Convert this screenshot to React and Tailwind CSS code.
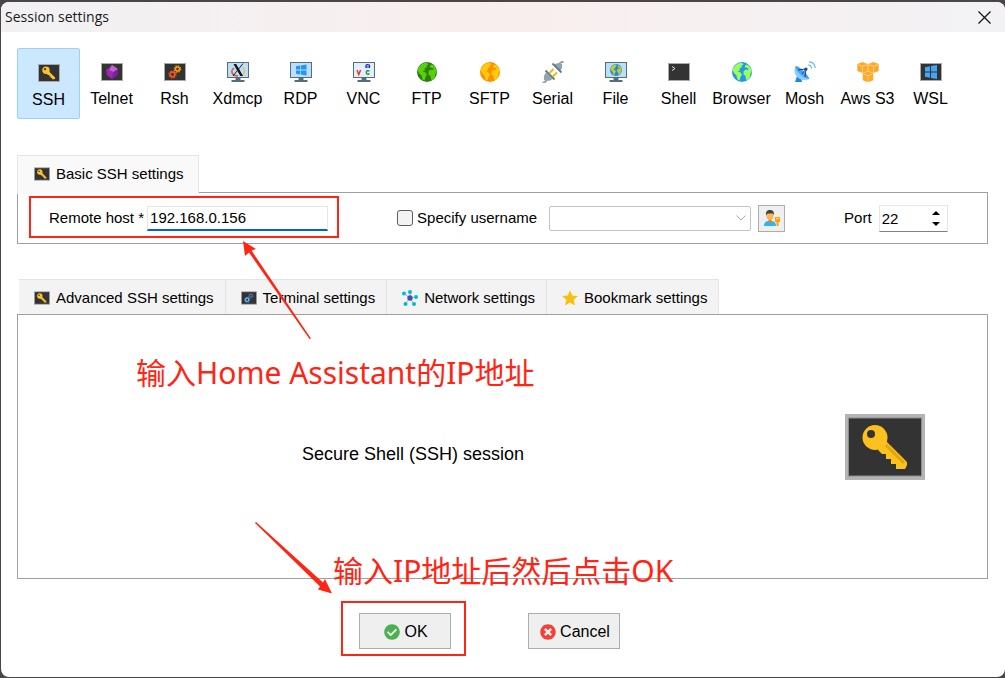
import { FaCheckCircle, FaTimesCircle } from "react-icons/fa";

function Screen({ children, className = "h-[18px] w-[22px]" }) {
  return (
    <svg viewBox="0 0 22 18" className={className} aria-hidden="true">
      <rect x="0.5" y="0.5" width="21" height="17" fill="#333" stroke="#a9a9a9" />
      {children}
    </svg>
  );
}

function KeyIcon({ className }) {
  return (
    <Screen className={className}>
      <path d="M10.500 7l6.200 6c1 1 .5 2.500-1 2.300h-1.700v-1.400h-1.400v-1.400h-1.300v-1.400H10L8.300 9.500z" fill="#fbc02d" />
      <circle cx="8" cy="6.300" r="3.700" fill="#fbc02d" />
      <circle cx="7" cy="5.200" r="1.100" fill="#333" />
    </Screen>
  );
}

function BigKeyIcon() {
  return (
    <svg viewBox="0 0 80 66" className="h-[66px] w-20" role="img" aria-label="SSH key">
      <rect width="80" height="66" fill="#b4b4b4" />
      <rect x="3.500" y="4" width="73" height="58" fill="#333" stroke="#8c8c8c" />
      <path d="M41 27l20 20c2 2 1 5-1 8h-9v-5h-5v-5h-5v-5h-4l-4-4z" fill="#fbc11f" />
      <path d="M41 31l18 18" stroke="#e5a50a" strokeWidth="3" />
      <circle cx="30" cy="23.500" r="12.500" fill="#fbc11f" />
      <circle cx="26" cy="20" r="4" fill="#333" />
    </svg>
  );
}

function GemIcon() {
  return (
    <Screen>
      <path d="M11 2l6 4-1 6.500-5 3.500-5-3.500L5 7z" fill="#9c27b0" />
      <path d="M11 2l6 4-4.500 3L8 7z" fill="#ba68c8" />
      <path d="M12.500 9L17 6l-1 6.500-5 3.500z" fill="#7b1fa2" />
      <path d="M11 2L8 7 5 7z" fill="#8e24aa" />
    </Screen>
  );
}

function GearsIcon({ low, high, className }) {
  return (
    <Screen className={className}>
      <circle cx="8.500" cy="11.500" r="2.300" fill="none" stroke={low} strokeWidth="1.700" />
      <circle cx="8.500" cy="11.500" r="3.500" fill="none" stroke={low} strokeWidth="1.200" strokeDasharray="1.500 1.250" />
      <circle cx="13.500" cy="6" r="2" fill="none" stroke={high} strokeWidth="1.400" />
      <circle cx="13.500" cy="6" r="3.200" fill="none" stroke={high} strokeWidth="1.200" strokeDasharray="1.400 1.110" />
    </Screen>
  );
}

function Monitor({ children }) {
  return (
    <svg viewBox="0 0 22 20" className="h-5 w-[22px]" aria-hidden="true">
      <rect x="0.500" y="0.500" width="21" height="15" fill="#bbdefb" stroke="#546e7a" />
      <path d="M8.500 16h5v2h4v2h-13v-2h4z" fill="#546e7a" />
      {children}
    </svg>
  );
}

function XdmcpIcon() {
  return (
    <Monitor>
      <path d="M7 6c-4 3-2 8 4 8" fill="none" stroke="#f4511e" strokeWidth="1.500" />
      <path d="M15 5c4 3 3 7-1 9" fill="none" stroke="#ffb74d" strokeWidth="1.300" />
      <path d="M6.500 2h2.700l6.800 12h-2.700z" fill="#111" />
      <path d="M16 1.500L6 14" stroke="#111" strokeWidth=".9" />
    </Monitor>
  );
}

function WindowsMark() {
  return (
    <path
      d="M6 4.300l4.300-.8v4.100H6zM11 3.400l5.500-.9v5.100H11zM6 8.400h4.300v4.100L6 11.700zM11 8.400h5.500v5.100l-5.500-.9z"
      fill="#2196f3"
    />
  );
}

function WslIcon() {
  return (
    <Screen>
      <path
        d="M5 4.200l5-.9v5.200H5zM11 3.100l6-1v6.400h-6zM5 9.500h5v5.200l-5-.9zM11 9.500h6v6.400l-6-1z"
        fill="#42a5f5"
      />
    </Screen>
  );
}

function VncIcon() {
  return (
    <Monitor>
      <rect x="1" y="1" width="20" height="14" fill="#e3f0fb" />
      <path d="M4 8l1.800 4.500L7.600 8" fill="none" stroke="#e53935" strokeWidth="1.500" />
      <path d="M13 6V3.500c0-1.200 3.500-1.200 3.500 0V6M13 5h3.500" fill="none" stroke="#1a23d8" strokeWidth="1.200" />
      <path d="M16.500 9.200c-1.500-1-3.200-.5-3.200 1.200s1.700 2.400 3.200 1.200" fill="none" stroke="#159a48" strokeWidth="1.500" />
    </Monitor>
  );
}

function GlobeShape({ sea, land }) {
  return (
    <>
      <circle cx="10" cy="10" r="10" fill={sea} />
      <path
        d="M3.500 3.500C5.500 1.500 8 .6 10 .8l1.500 2-2 .7.5 1.500-2.500 1.500.5 2-2.500.5 3 1.500 1.500 2-1.500 2.500-1 3.500-2-1-1-4-2.500-2.500L.5 8C1 6 2 4.800 3.500 3.500z"
        fill={land}
      />
      <path
        d="M12.500 5L14 2.500l2.500.7c2 2 3 4.300 3.200 6.800l-1.200 1-.5 4-2.500 3-1.500-.5-.5-3.500-2-1.500v-3l2-2 2.500.5.500-1.500z"
        fill={land}
      />
    </>
  );
}

function GlobeIcon({ sea, land }) {
  return (
    <svg viewBox="0 0 20 20" className="size-5" aria-hidden="true">
      <GlobeShape sea={sea} land={land} />
    </svg>
  );
}

function FileIcon() {
  return (
    <Monitor>
      <g transform="translate(5 2) scale(.6)">
        <GlobeShape sea="#1e88e5" land="#c0ca33" />
      </g>
    </Monitor>
  );
}

function SerialIcon() {
  return (
    <svg viewBox="0 0 22 22" className="size-[22px]" aria-hidden="true">
      <path d="M.5 21.500h2L5 19M17 3l2.500-2h2" fill="none" stroke="#90a4ae" strokeWidth="1.800" />
      <path d="M2 19c-.5-3 0-5 2-7.500l6.500 6.500c-2.500 2-5.500 2.500-8.500 1zM20 3c.5 3 0 5-2 7.500L11.500 4c2.500-2 5.500-2.500 8.500-1z" fill="#90a4ae" />
      <path d="M3.500 9.500l9 9M10.500 2.500l9 9" stroke="#607d8b" strokeWidth="1.800" />
      <path d="M7.500 12l4-4M11 15.500l4-4" stroke="#ffb300" strokeWidth="1.800" />
    </svg>
  );
}

function ShellIcon() {
  return (
    <Screen>
      <path d="M4 3.500l3 2-3 2" fill="none" stroke="#ddd" />
    </Screen>
  );
}

function MoshIcon() {
  return (
    <svg viewBox="0 0 22 22" className="size-[22px]" aria-hidden="true">
      <path d="M3 15l-2 6h7l-1-4z" fill="#1e88e5" />
      <path d="M1.500 5c-2 5-1 9 3 12 3 2.500 7 2.500 11 1z" fill="#90caf9" />
      <path d="M1.500 5c4 0 12 8 14 13-5 0-14-7-14-13z" fill="#42a5f5" />
      <path d="M4 9l8-1-1 8M12 8l-4 5" fill="none" stroke="#1a3c83" />
      <circle cx="12" cy="8" r="1.600" fill="#0d47a1" />
      <path d="M14 4c2 0 3.500 1.500 3.500 3.500M15 .8c3.500.2 6 2.700 6.200 6.200" fill="none" stroke="#64b5f6" strokeWidth="1.200" />
    </svg>
  );
}

function Bucket({ x, y }) {
  return (
    <g transform={`translate(${x} ${y})`}>
      <path d="M5.500 0l5.200 2v7l-5.200 2-5.200-2V2z" fill="#ffa726" />
      <path d="M1 2.700l4.500 1.600L10 2.700M5.500 4.300v6" fill="none" stroke="#ffe0b2" strokeWidth=".7" />
    </g>
  );
}

function AwsIcon() {
  return (
    <svg viewBox="0 0 22 20" className="h-5 w-[22px]" aria-hidden="true">
      <Bucket x={0} y={0} />
      <Bucket x={11} y={0} />
      <Bucket x={5.5} y={9.3} />
    </svg>
  );
}

function NetworkIcon() {
  return (
    <svg viewBox="0 0 16 16" className="size-4" aria-hidden="true">
      <path d="M8 8L8 2M8 8L2 3.500M8 8l6-1M8 8l4 6M8 8l-5 6" stroke="#90a4ae" strokeWidth=".8" />
      <circle cx="8" cy="8" r="2.700" fill="#3f51b5" />
      <g fill="#00bcd4">
        <circle cx="8" cy="2" r="2" />
        <circle cx="2" cy="3.500" r="2" />
        <circle cx="14" cy="7" r="2" />
        <circle cx="12" cy="14" r="2" />
        <circle cx="3.500" cy="14" r="2" />
      </g>
    </svg>
  );
}

function StarIcon() {
  return (
    <svg viewBox="0 0 16 16" className="size-4" aria-hidden="true">
      <path d="M8 .3l2.300 5.200 5.600.5-4.200 3.800 1.200 5.600L8 12.500l-4.900 2.900 1.200-5.600L.1 6l5.600-.5z" fill="#f4c20d" />
    </svg>
  );
}

function UserKeyIcon() {
  return (
    <svg viewBox="0 0 16 16" className="size-4" aria-hidden="true">
      <path d="M0 16c0-3 1.500-4.500 4-5h4c2.500.5 4 2 4 5z" fill="#29b6f6" />
      <path d="M4.500 9h3v2.500L6 13l-1.500-1.500z" fill="#f57c00" />
      <ellipse cx="6" cy="6" rx="3.500" ry="4" fill="#ffb74d" />
      <path d="M2 5.500C1.500 2 3 0 6 0s4.500 2 4 5.500L9 3.500H3.500z" fill="#424242" />
      <path d="M11 7h5v5h-1.500v4h-2v-4H11z" fill="#ffa000" />
      <path d="M12.500 8.500h2" stroke="#fff" />
    </svg>
  );
}

const sessions = [
  { name: "SSH", icon: <KeyIcon /> },
  { name: "Telnet", icon: <GemIcon /> },
  { name: "Rsh", icon: <GearsIcon low="#f4511e" high="#ffa000" /> },
  { name: "Xdmcp", icon: <XdmcpIcon /> },
  { name: "RDP", icon: <Monitor><WindowsMark /></Monitor> },
  { name: "VNC", icon: <VncIcon /> },
  { name: "FTP", icon: <GlobeIcon sea="#2e7d0e" land="#57d20a" /> },
  { name: "SFTP", icon: <GlobeIcon sea="#ff8f00" land="#ffca0a" /> },
  { name: "Serial", icon: <SerialIcon /> },
  { name: "File", icon: <FileIcon /> },
  { name: "Shell", icon: <ShellIcon /> },
  { name: "Browser", icon: <GlobeIcon sea="#2196f3" land="#9cff57" /> },
  { name: "Mosh", icon: <MoshIcon /> },
  { name: "Aws S3", icon: <AwsIcon /> },
  { name: "WSL", icon: <WslIcon /> },
];

const tabs = [
  { name: "Advanced SSH settings", icon: <KeyIcon className="h-[14px] w-4" /> },
  { name: "Terminal settings", icon: <GearsIcon low="#64b5f6" high="#5c6bc0" className="h-[14px] w-4" /> },
  { name: "Network settings", icon: <NetworkIcon /> },
  { name: "Bookmark settings", icon: <StarIcon /> },
];

function TitleBar() {
  return (
    <header className="flex h-[30px] items-center justify-between bg-linear-to-r from-[#f1f1f3] via-[#f9eeee] to-[#f2f2f4] pr-[14px] pl-1">
      <h1 className="font-['Open_Sans','Noto_Sans',sans-serif] text-sm text-[#1a1a1a]">Session settings</h1>
      <button type="button" aria-label="Close">
        <svg viewBox="0 0 13 13" className="size-[13px]">
          <path d="M.5.5l12 12M12.500.5l-12 12" stroke="#111" strokeWidth="1.200" />
        </svg>
      </button>
    </header>
  );
}

function SessionBar() {
  return (
    <nav className="flex pt-4 pl-4">
      {sessions.map(({ name, icon }, index) => (
        <button
          type="button"
          key={name}
          className={`flex h-[71px] w-[63px] flex-col items-center rounded-xs border text-base whitespace-nowrap ${index === 0 ? "border-[#99d1ff] bg-[#cce8ff] pt-[13px]" : "border-transparent pt-3"}`}
        >
          <span className="flex h-[22px] items-center">{icon}</span>
          <span className="mt-1 leading-6">{name}</span>
        </button>
      ))}
    </nav>
  );
}

function BasicSettings() {
  return (
    <section className="mt-9 pr-[17px] pl-4 text-[15px]">
      <div className="relative z-10 -mb-[2px] flex h-[39px] w-[182px] items-center gap-[6px] border border-b-0 border-[#e4e4e4] bg-[#f9f9f9] pb-[2px] pl-4">
        <KeyIcon className="h-[14px] w-4" />
        <h2>Basic SSH settings</h2>
      </div>

      <div className="flex h-[52px] items-center border border-[#a0a0a0] pl-[31px]">
        <label htmlFor="host">Remote host *</label>
        <input
          id="host"
          defaultValue="192.168.0.156"
          className="ml-[3px] h-[25px] w-[181px] border border-b-2 border-[#e6e6e6] border-b-[#0067c0] px-[2px] outline-none"
        />

        <input
          id="specify"
          type="checkbox"
          className="ml-[69px] size-4 appearance-none rounded-[3px] border border-[#5c5c5c] bg-[#f3f3f3]"
        />
        <label htmlFor="specify" className="ml-1">
          Specify username
        </label>

        <div className="ml-3 grid w-[202px] items-center">
          <select
            aria-label="Username"
            disabled
            className="col-start-1 row-start-1 h-[25px] appearance-none rounded-xs border border-[#c4c4c4] bg-white"
          />
          <svg viewBox="0 0 10 6" className="col-start-1 row-start-1 mr-[5px] h-[6px] w-[10px] justify-self-end">
            <path d="M.5.5L5 5l4.500-4.500" fill="none" stroke="#a8a8a8" />
          </svg>
        </div>
        <button
          type="button"
          aria-label="Manage users"
          className="ml-[7px] flex size-[27px] items-center justify-center border border-[#adadad] bg-[#efefef]"
        >
          <UserKeyIcon />
        </button>

        <label htmlFor="port" className="ml-[59px]">
          Port
        </label>
        <div className="ml-[7px] flex h-[27px] w-[69px] items-center border border-[#e6e6e6] border-b-[#808080] pr-[7px]">
          <input id="port" defaultValue="22" className="h-6 w-full min-w-0 px-[2px] outline-none" />
          <div className="flex flex-col gap-[7px]">
            <button type="button" aria-label="Increase port">
              <svg viewBox="0 0 8 4" className="block h-1 w-2">
                <path d="M0 4l4-4 4 4z" />
              </svg>
            </button>
            <button type="button" aria-label="Decrease port">
              <svg viewBox="0 0 8 4" className="block h-1 w-2">
                <path d="M0 0h8L4 4z" />
              </svg>
            </button>
          </div>
        </div>
      </div>
    </section>
  );
}

function SessionPanel() {
  return (
    <section className="mt-[35px] pr-[17px] pl-4 text-[15px]">
      <div className="ml-[2px] flex">
        {tabs.map(({ name, icon }) => (
          <button
            type="button"
            key={name}
            className="flex h-[35px] items-center gap-[6px] border-t border-r border-[#e4e4e4] bg-[#f3f3f3] pt-[2px] pr-[11px] pl-[15px] whitespace-nowrap"
          >
            {icon}
            {name}
          </button>
        ))}
      </div>

      <div className="flex h-[265px] items-center justify-between border border-[#a0a0a0] pr-[62px] pl-[284px]">
        <p className="mt-[14px] text-lg">Secure Shell (SSH) session</p>
        <BigKeyIcon />
      </div>
    </section>
  );
}

function Actions() {
  return (
    <footer className="flex gap-[77px] pt-[34px] pb-7 pl-[358px] text-base">
      <button
        type="button"
        className="flex h-9 w-[92px] items-center justify-center gap-1 border border-[#adadad] bg-[#efefef] pt-[2px] pl-[2px]"
      >
        <FaCheckCircle className="text-[#4caf50]" />
        OK
      </button>
      <button
        type="button"
        className="flex h-9 w-[92px] items-center justify-center gap-1 border border-[#adadad] bg-[#efefef] pt-[2px] pl-[2px]"
      >
        <FaTimesCircle className="text-[#f44336]" />
        Cancel
      </button>
    </footer>
  );
}

/* Red marks and notes that lie over the dialog */
function Annotations() {
  return (
    <div className="pointer-events-none absolute inset-0 z-20 font-['Noto_Sans','Noto_Sans_CJK_SC',sans-serif] text-[30px] leading-9 whitespace-nowrap text-[#ff2414]">
      <div className="absolute top-[196px] left-[29px] h-[42px] w-[310px] border-2 border-[#ff2414]" />
      <div className="absolute top-[601px] left-[341px] h-[55px] w-[125px] border-2 border-[#ff2414]" />
      <p className="absolute top-[355px] left-[136px]">输入Home Assistant的IP地址</p>
      <p className="absolute top-[553px] left-[333px]">输入IP地址后然后点击OK</p>
      <svg viewBox="0 0 68 98" className="absolute top-[241px] left-[243px] h-[98px] w-[68px]" fill="#ff2414">
        <path d="M0 0l13 8-4.500 1.500L68 97.500l-1.500.5L6 11.500 2 15z" />
      </svg>
      <svg viewBox="0 0 78 72" className="absolute top-[522px] left-[255px] h-[72px] w-[78px]" fill="#ff2414">
        <path d="M1 0l67 60.500 2-3.500 7 14.500-14-4 2-3L0 1z" />
      </svg>
    </div>
  );
}

function App() {
  return (
    <div className="relative bg-[#4a4647] pt-[2px] pb-px pl-px font-['Liberation_Sans',Arial,sans-serif] text-black">
      <main className="overflow-hidden rounded-lg bg-white">
        <TitleBar />
        <SessionBar />
        <BasicSettings />
        <SessionPanel />
        <Actions />
      </main>
      <Annotations />
    </div>
  );
}

export default App;
